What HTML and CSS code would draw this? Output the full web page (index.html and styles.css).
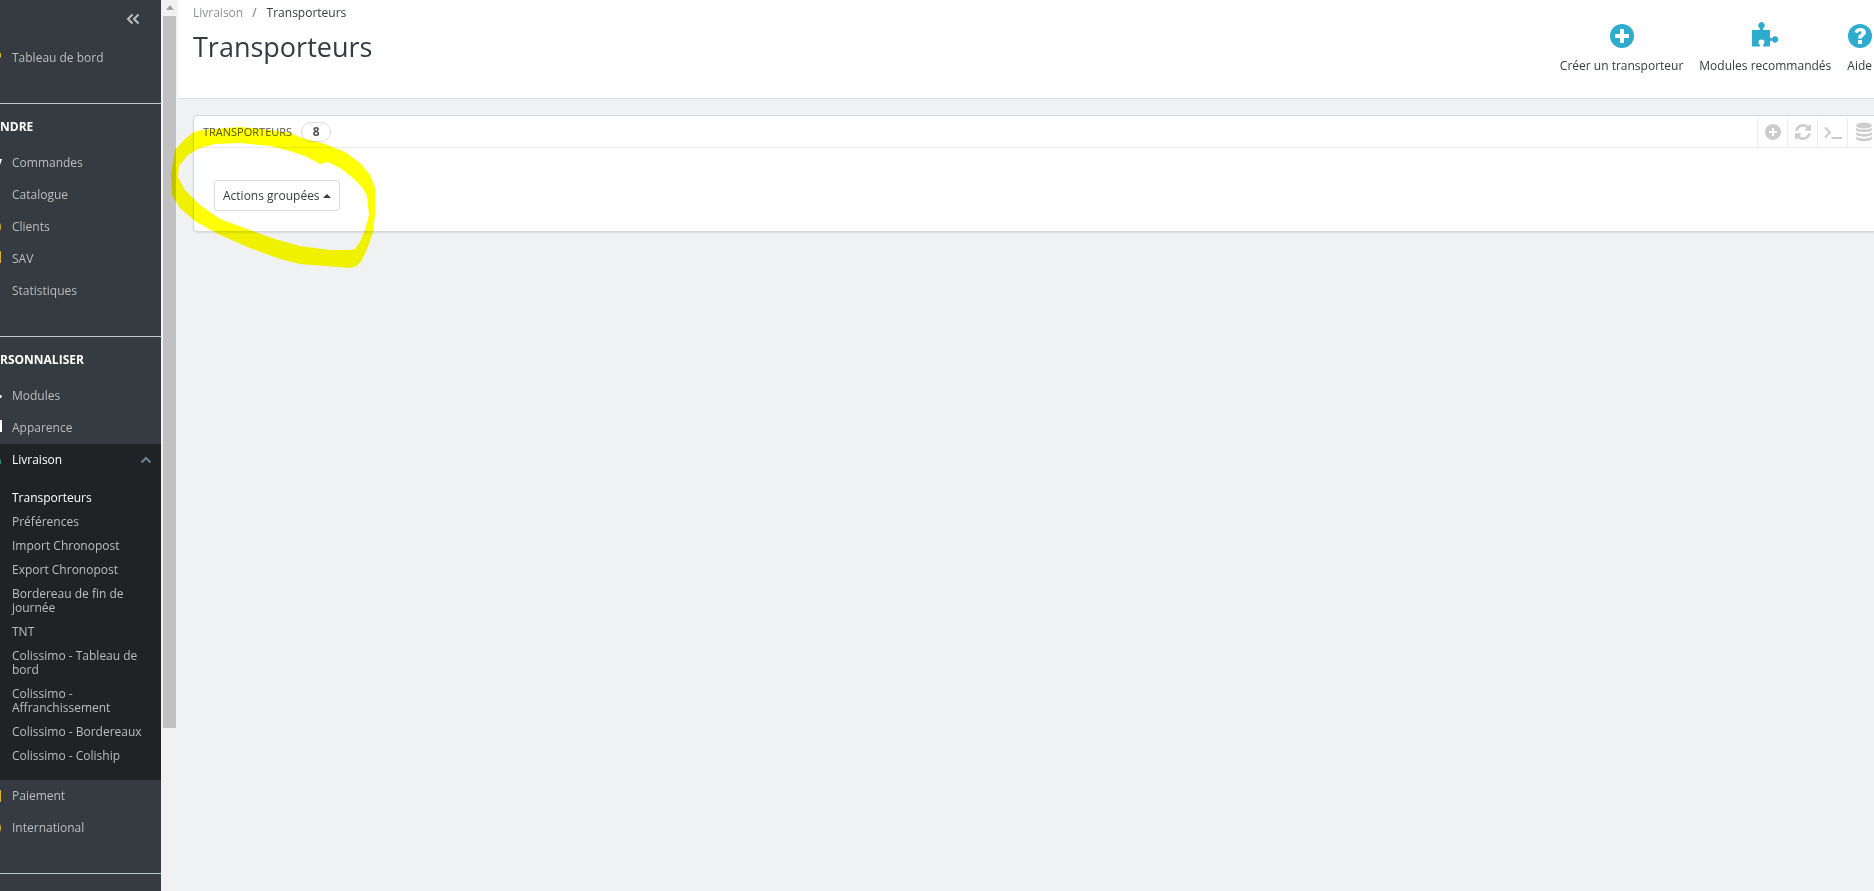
FILE: index.html
```html
<!DOCTYPE html>
<html lang="fr">
<head>
<meta charset="utf-8">
<title>Transporteurs</title>
<link rel="stylesheet" href="styles.css">
</head>
<body>
<div class="app">
  <nav class="sidebar" aria-label="Menu principal">
    <div class="collapse-row">
      <button class="collapse" type="button" aria-label="Réduire le menu">
        <svg width="14" height="12" viewBox="0 0 14 12"><path d="M6.500 1.500 2 6l4.500 4.500M12.500 1.500 8 6l4.500 4.500" /></svg>
      </button>
    </div>
    <ul class="menu">
      <li><a class="item" href="#"><svg class="mark yellow" viewBox="0 0 20 20"><path d="M13 5h6v5l-2-1-5 5-1-2 4-4z"/></svg>Tableau de bord</a></li>
    </ul>
    <h2 class="section">NDRE</h2>
    <ul class="menu">
      <li><a class="item" href="#"><svg class="mark white" viewBox="0 0 20 20"><path d="M1 6h19l-2 6H4z"/></svg>Commandes</a></li>
      <li><a class="item" href="#"><svg class="mark yellow" viewBox="0 0 20 20"><path d="M2 4h14v12H2z"/></svg>Catalogue</a></li>
      <li><a class="item" href="#"><svg class="mark yellow" viewBox="0 0 20 20"><circle cx="10.500" cy="10" r="8.500"/></svg>Clients</a></li>
      <li><a class="item" href="#"><svg class="mark yellow" viewBox="0 0 20 20"><path d="M2 2h17v12H5l-3 3z"/></svg>SAV</a></li>
      <li><a class="item" href="#"><svg class="mark yellow" viewBox="0 0 20 20"><path d="M2 3h14v14H2z"/></svg>Statistiques</a></li>
    </ul>
    <h2 class="section">RSONNALISER</h2>
    <ul class="menu">
      <li><a class="item" href="#"><svg class="mark white" viewBox="0 0 20 20"><path d="M2 5h14v4h3l1 1-1 2h-3v5H2z"/></svg>Modules</a></li>
      <li><a class="item" href="#"><svg class="mark white" viewBox="0 0 20 20"><path d="M2 2h18v12H2z"/></svg>Apparence</a></li>
      <li class="open">
        <a class="item" href="#"><svg class="mark green" viewBox="0 0 20 20"><path d="M2 4h11v3h3l3 3v4H2z"/></svg>Livraison
          <svg class="chevron" width="12" height="8" viewBox="0 0 12 8"><path d="M1.500 6.500 6 2l4.500 4.500"/></svg></a>
        <ul class="submenu">
          <li><a class="current" href="#">Transporteurs</a></li>
          <li><a href="#">Préférences</a></li>
          <li><a href="#">Import Chronopost</a></li>
          <li><a href="#">Export Chronopost</a></li>
          <li><a href="#">Bordereau de fin de journée</a></li>
          <li><a href="#">TNT</a></li>
          <li><a href="#">Colissimo - Tableau de bord</a></li>
          <li><a href="#">Colissimo - Affranchissement</a></li>
          <li><a href="#">Colissimo - Bordereaux</a></li>
          <li><a href="#">Colissimo - Coliship</a></li>
        </ul>
      </li>
      <li><a class="item" href="#"><svg class="mark yellow" viewBox="0 0 20 20"><path d="M2 4h17v12H2z"/></svg>Paiement</a></li>
      <li><a class="item" href="#"><svg class="mark yellow" viewBox="0 0 20 20"><circle cx="10.500" cy="10" r="8.500"/></svg>International</a></li>
    </ul>
    <div class="section"></div>
  </nav>
  <div class="scrollbar" aria-hidden="true">
    <svg width="8" height="5" viewBox="0 0 8 5"><path d="M0 5h8L4 0z"/></svg>
    <div class="thumb"></div>
  </div>
  <div class="content">
    <header class="page-head">
      <div class="head-text">
        <nav class="breadcrumb" aria-label="Fil d'Ariane"><a href="#">Livraison</a><span class="slash">/</span><span>Transporteurs</span></nav>
        <h1>Transporteurs</h1>
      </div>
      <div class="toolbar">
        <a href="#"><svg width="30" height="30" viewBox="0 0 30 30"><circle cx="15" cy="15" r="12"/><path class="cut" d="M13 8h4v5h5v4h-5v5h-4v-5H8v-4h5z"/></svg>Créer un transporteur</a>
        <a href="#"><svg width="30" height="30" viewBox="0 0 30 30"><path d="M2 9h7c1.500 0 1.200-1.500.4-2.200A3.200 3.200 0 1 1 13.600 6.800C12.800 7.500 12.500 9 14 9h6v7c0 1.300 1.500 1.500 2.300.8A3.200 3.200 0 1 1 22.300 20.200C21.500 19.500 20 19.700 20 21v4.500h-6c-1.300 0-1.200-1-.6-1.800C15 22 15 18.500 11.500 18.500S8 22 9.600 23.700c.6.800.7 1.800-.6 1.800H2z"/></svg>Modules recommandés</a>
        <a href="#"><svg width="24" height="30" viewBox="3 0 24 30"><circle cx="15" cy="15" r="12"/><path class="cut" d="M13 19h4v4h-4zM9.500 11C11 5.500 21 6 21 11.500c0 3-4 3.500-4 6h-4c0-4 3.500-4 3.500-6 0-1.800-3-1.800-3.800.8z"/></svg>Aide</a>
      </div>
    </header>
    <main>
      <section class="panel">
        <div class="panel-head">
          <h2>TRANSPORTEURS</h2><span class="badge">8</span>
          <div class="tools">
            <button type="button" aria-label="Ajouter"><svg width="16" height="16" viewBox="0 0 16 16"><circle cx="8" cy="8" r="8"/><path class="cut" d="M7 4h2v3h3v2H9v3H7V9H4V7h3z"/></svg></button>
            <button type="button" aria-label="Rafraîchir"><svg width="16" height="16" viewBox="0 0 1536 1536"><path d="M1511 928q0 5-1 7-64 268-268 434.500t-478 166.500q-146 0-282.500-55t-243.500-157l-129 129q-19 19-45 19t-45-19-19-45v-448q0-26 19-45t45-19h448q26 0 45 19t19 45-19 45l-137 137q71 66 161 102t187 36q134 0 250-65t186-179q11-17 53-117 8-23 30-23h192q13 0 22.500 9.500t9.500 22.500zm25-800v448q0 26-19 45t-45 19h-448q-26 0-45-19t-19-45 19-45l138-138q-148-137-349-137-134 0-250 65t-186 179q-11 17-53 117-8 23-30 23h-199q-13 0-22.500-9.500t-9.500-22.500v-7q65-268 270-434.500t480-166.500q146 0 284 55.500t245 156.500l130-129q19-19 45-19t45 19 19 45z"/></svg></button>
            <button type="button" aria-label="Afficher la requête SQL"><svg class="line" width="18" height="14" viewBox="0 0 18 14"><path d="M1 2.500 6 7.500l-5 5M7.500 13H18"/></svg></button>
            <button type="button" aria-label="Exporter vers le gestionnaire SQL"><svg width="16" height="20" viewBox="0 0 16 20"><ellipse cx="8" cy="3.500" rx="8" ry="3"/><path d="M0 5.500c2 2.700 14 2.700 16 0v2.300c-1 3.200-15 3.200-16 0zM0 10c2 2.700 14 2.700 16 0v2.300c-1 3.200-15 3.200-16 0zM0 14.500c2 2.700 14 2.700 16 0v2c-1 3.600-15 3.600-16 0z"/></svg></button>
          </div>
        </div>
        <div class="panel-body">
          <button class="bulk" type="button">Actions groupées <svg width="8" height="4" viewBox="0 0 8 4"><path d="M0 4h8L4 0z"/></svg></button>
        </div>
      </section>
    </main>
  </div>
</div>
<svg class="highlight" width="220" height="160" viewBox="165 120 220 160" aria-hidden="true">
  <path fill-rule="evenodd" d="M203 130L240 127 270 130 290 133 305 139 325 144 345 152 360 163 370 175 375 188V215L373 232 368 247 362 260 357 266 350 268 325 266 300 264 280 259 250 248 220 235 195 221 180 208 172 195 171 175 175 150 185 139 194 132zM200 148L215 144 240 143 270 146 290 151 305 156 320 164 328 162 340 168 352 177 362 187 367 196 369 215 365 230 360 242 355 249 350 250 330 250 300 246 275 239 250 230 220 219 200 205 185 190 178 177 179 166 188 155z"/>
</svg>
</body>
</html>
```
FILE: styles.css
```css
* { box-sizing: border-box; }
body {
  margin: 0;
  background: #eff1f2;
  color: #363a41;
  font: 12px/16px "Open Sans", "Noto Sans", sans-serif;
}
ul { list-style: none; margin: 0; padding: 0; }
a { color: inherit; text-decoration: none; }
button { font: inherit; color: inherit; cursor: pointer; }
.app { display: flex; height: 100vh; overflow: hidden; }

.sidebar {
  flex: 0 0 161px;
  overflow: hidden;
  background: #363a41;
  color: #bebebe;
}
.collapse-row { display: flex; justify-content: flex-end; height: 42px; padding: 13px 21px 0 0; }
.collapse { display: block; height: 14px; padding: 0; border: 0; background: none; }
.collapse path { fill: none; stroke: #bebebe; stroke-width: 2; }
.item { display: flex; align-items: center; height: 32px; gap: 10px; margin-left: -18px; padding-right: 9px; }
.mark { flex: none; width: 20px; height: 20px; }
.yellow { fill: #dfb02c; }
.white { fill: #fff; }
.green { fill: #1f8f6c; }
.section {
  height: 44px;
  margin: 29px 0 0;
  padding: 15px 0 0;
  border-top: 1px solid #bbcdd2;
  color: #fff;
  font-size: 12px;
  line-height: 16px;
  font-weight: 700;
}
.open { background: #202226; }
.open > .item { color: #fff; }
.chevron { margin-left: auto; }
.chevron path { fill: none; stroke: #6c868e; stroke-width: 2; }
.submenu { padding: 10px 12px 12px; }
.submenu a { display: block; padding: 5px 0; line-height: 14px; }
.submenu .current { color: #fff; }

.scrollbar {
  flex: 0 0 17px;
  display: flex;
  flex-direction: column;
  align-items: center;
  gap: 6px;
  padding: 5px 0 163px;
  background: #f1f1f1;
}
.scrollbar path { fill: #a3a3a3; }
.thumb { flex: 1; width: 13px; background: #c1c1c1; }

.content { flex: 1; min-width: 0; }
.page-head {
  display: flex;
  justify-content: space-between;
  height: 99px;
  padding: 5px 2px 0 15px;
  background: #fff;
  border-bottom: 1px solid #dddee0;
}
.breadcrumb { display: flex; }
.breadcrumb a { color: #8d8f94; }
.slash { margin: 0 10px 0 9px; color: #6c6f74; }
h1 { margin: 8px 0 0; font-size: 27px; line-height: 36px; font-weight: 400; }
.toolbar { display: flex; gap: 16px; padding-top: 16px; }
.toolbar a { display: flex; flex-direction: column; align-items: center; gap: 7px; }
.toolbar svg { fill: #2eacce; }
svg .cut { fill: #fff; }

main { padding: 16px 0 0 15px; }
.panel {
  background: #fff;
  border: 1px solid #d3d8db;
  border-right: 0;
  border-radius: 5px 0 0 5px;
  box-shadow: 0 1px 2px rgba(0, 0, 0, .1);
}
.panel-head {
  display: flex;
  align-items: center;
  height: 32px;
  margin: 0 2px 0 4px;
  padding-left: 5px;
  border-bottom: 1px solid #eaedef;
}
.panel-head h2 { margin: 0; font-size: 11px; line-height: 20px; font-weight: 400; color: #555; }
.badge {
  width: 30px;
  height: 20px;
  margin-left: 9px;
  border: 1px solid #dcdcde;
  border-radius: 10px;
  color: #555;
  font-size: 12px;
  line-height: 18px;
  font-weight: 700;
  text-align: center;
}
.tools { display: flex; align-self: flex-end; margin-left: auto; }
.tools button {
  display: flex;
  align-items: center;
  justify-content: center;
  width: 30px;
  height: 29px;
  padding: 0 0 1px;
  border: 0;
  border-left: 1px solid #eaedef;
  background: none;
}
.tools button:last-child { width: 25px; padding-left: 7px; }
.tools svg { flex: none; fill: #ccc; }
.tools .line { fill: none; stroke: #ccc; stroke-width: 2; }
.panel-body { padding: 32px 20px 20px; }
.bulk {
  display: flex;
  align-items: center;
  gap: 3px;
  height: 31px;
  padding: 0 8px;
  border: 1px solid #dcdcde;
  border-radius: 3px;
  background: #fff;
}
.bulk svg { fill: #363a41; }

/* Marker stroke drawn over the page */
.highlight {
  position: absolute;
  left: 165px;
  top: 120px;
  fill: #ff0;
  mix-blend-mode: multiply;
  pointer-events: none;
}
```
